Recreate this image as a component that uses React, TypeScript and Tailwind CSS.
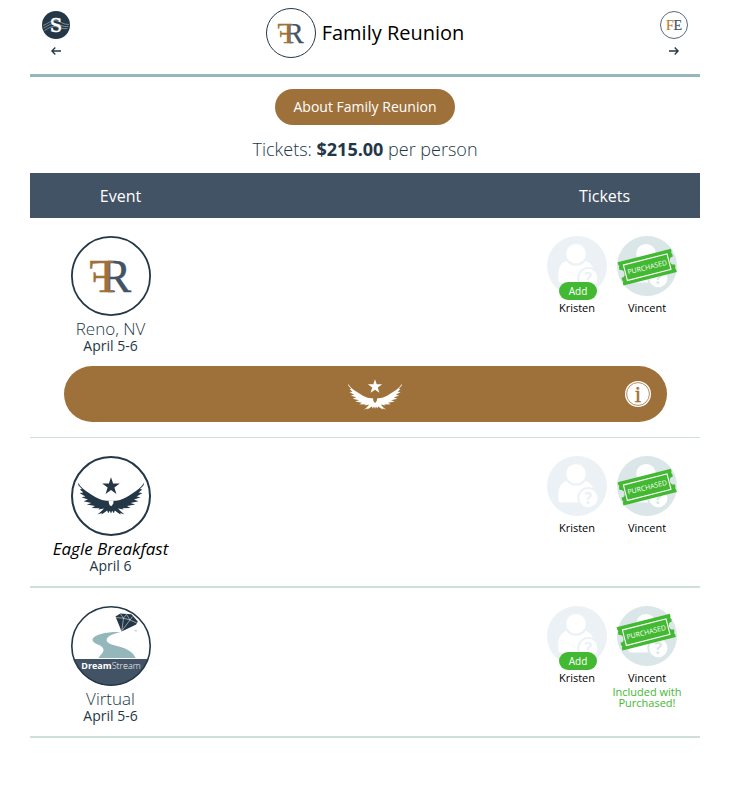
import React, { useId } from 'react';

const SERIF = 'Liberation Serif, serif';
const SANS = 'Open Sans, sans-serif';

function FamilyReunionLogo({ className, stroke }: { className: string; stroke: number }) {
  const clip = useId();
  return (
    <svg viewBox="0 0 80 80" className={className} role="img" aria-label="Family Reunion logo">
      <defs>
        <clipPath id={clip}>
          <rect x="37" y="20" width="30" height="40" />
        </clipPath>
      </defs>
      <circle cx="40" cy="40" r={40 - stroke / 2} fill="#fff" stroke="#243746" strokeWidth={stroke} />
      <text x="29.5" y="55.5" fontFamily={SERIF} fontSize="46" fill="#435366" stroke="#435366" strokeWidth="0.4" clipPath={`url(#${clip})`}>R</text>
      <g transform="translate(43.3 0) scale(-1 1)">
        <text x="0" y="55.5" fontFamily={SERIF} fontSize="46" fill="#9e713b" stroke="#9e713b" strokeWidth="0.5">F</text>
      </g>
    </svg>
  );
}

function EagleShape({ fill, gap }: { fill: string; gap: string }) {
  const wing =
    'M6.8 26.6 C10 31.5 14 34.8 18 37 C22.5 40 27 42.8 31 43.9 C34 44.6 37 44.8 40.2 44.8 V57.6 L38.8 54.8 L37.2 57.2 L36.2 54.6 L32.8 57 L30.4 58.4 L30.8 56.9 L26.4 58.6 L30 55.6 L33 52.4 L27.4 53.6 L28.6 52.2 L20.6 51.9 L24 50 L15.8 48.6 L20.4 47 L12.6 45.2 L17 43.6 L10.4 41.3 L14.4 40.4 L8.6 37 L12.4 36.6 L8.8 33.4 L11 33 L7.6 29.6 Z';
  return (
    <>
      <path d="M40 21.3 L42.1 27.5 L48.8 27.5 L43.4 31.5 L45.4 38 L40 34.1 L34.6 38 L36.6 31.5 L31.2 27.5 L37.9 27.5 Z" fill={fill} />
      <path d={wing} fill={fill} />
      <path d={wing} fill={fill} transform="translate(80 0) scale(-1 1)" />
      <path d="M37.6 44.4 H42.6 L42.2 47.8 L40.6 50 L38.8 49.4 L37.9 47 Z" fill={gap} />
    </>
  );
}

function EagleLogo() {
  return (
    <svg viewBox="0 0 80 80" className="size-20" role="img" aria-label="Eagle Breakfast logo">
      <circle cx="40" cy="40" r="39" fill="#fff" stroke="#243746" strokeWidth="2" />
      <EagleShape fill="#243746" gap="#fff" />
    </svg>
  );
}

function DreamStreamLogo() {
  return (
    <svg viewBox="0 0 80 80" className="size-20" role="img" aria-label="DreamStream logo">
      <circle cx="40" cy="40" r="39" fill="#fff" />
      <path d="M3 53 H77 A39 39 0 0 1 3 53 Z" fill="#435366" />
      <path d="M50 26 C38 25.5 22 28 21.5 34 C21.3 38 32 38.5 32.5 43.5 C32.6 47 29 49 27.5 52 H64.5 C62 45 54 42 46 40 C38 38 34.5 36 36 32.5 C37.5 29.5 43 27.5 50 26 Z" fill="#93b7bb" />
      <path d="M44.5 10.5 L49.3 7.6 L60.4 8.2 L66.8 15.5 L65.2 18.6 L50.6 25.6 Z" fill="#243746" />
      <path d="M45.2 11.5 L52.5 12.2 L59 14 L65.8 17 M52.5 12.2 L50.8 24.8 L59 14 M49.5 8 L52.5 12.2 L55.5 8.4 L59 14 L61.5 10.5" fill="none" stroke="#fff" strokeWidth="0.5" />
      <path d="M63.5 24.8 h2.6" stroke="#8b96a0" strokeWidth="0.6" />
      <circle cx="40" cy="40" r="39.2" fill="none" stroke="#243746" strokeWidth="1.6" />
      <text x="40" y="62.6" textAnchor="middle" fontFamily={SANS} fontSize="9" fill="#fff">
        <tspan fontWeight="700">Dream</tspan>
        <tspan fontWeight="300">Stream</tspan>
      </text>
    </svg>
  );
}

function StreamBadge() {
  return (
    <svg viewBox="0 0 28 28" className="size-7" aria-hidden="true">
      <circle cx="14" cy="14" r="14" fill="#243746" />
      <g fill="none" stroke="#8fa0ad" strokeWidth="0.8">
        <path d="M1 14.5 C6 12.5 9 9.5 13 9.5 C18 9.5 21 14 27 13.5" />
        <path d="M1.5 17 C6 15 9 12 13 12.5 C18 13 21 16.5 26.5 15.5" />
        <path d="M2.5 19.5 C7 17 9 15 13 15.5 C18 16 20 18.5 25.5 17.5" />
      </g>
      <text x="14" y="20.6" textAnchor="middle" fontFamily="DejaVu Serif, serif" fontSize="18" fill="#fff" stroke="#fff" strokeWidth="0.5">S</text>
    </svg>
  );
}

function FeBadge() {
  return (
    <svg viewBox="0 0 28 28" className="size-7" aria-hidden="true">
      <circle cx="14" cy="14" r="13.5" fill="#fff" stroke="#5a6978" strokeWidth="1" />
      <text x="13.4" y="19" fontFamily={SERIF} fontSize="14" fill="#435366" stroke="#435366" strokeWidth="0.2">E</text>
      <text x="6" y="19" fontFamily={SERIF} fontSize="14" fill="#c07a2c" stroke="#c07a2c" strokeWidth="0.2">F</text>
    </svg>
  );
}

function Arrow({ left }: { left?: boolean }) {
  return (
    <svg viewBox="0 0 10 8" className="h-2 w-[10px]" fill="none" stroke="#243746" strokeWidth="1.3" aria-hidden="true">
      {left ? <path d="M10 4 H1 M4.3 0.5 L0.9 4 L4.3 7.5" /> : <path d="M0 4 H9 M5.7 0.5 L9.1 4 L5.7 7.5" />}
    </svg>
  );
}

function Avatar({ purchased }: { purchased?: 'ticket' | 'included' }) {
  const bg = purchased ? '#dbe6e8' : '#ebf1f4';
  return (
    <svg viewBox="0 0 60 60" className="size-[60px] overflow-visible" aria-hidden="true">
      <circle cx="30" cy="30" r="30" fill={bg} />
      <path d="M14 46.5 C12 46.5 11.4 45.5 11.4 44 V38 C11.4 30 15 26 20 25 H38 C43 26 47 30 47 38 V46.5 Z" fill="#fff" />
      <circle cx="29" cy="17.7" r="12" fill={bg} />
      <circle cx="29" cy="17.7" r="9.8" fill="#fff" />
      <circle cx="41.3" cy="42" r="11" fill={bg} />
      <circle cx="41.3" cy="42" r="9.2" fill="#fff" />
      <text x="41.3" y="47.7" textAnchor="middle" fontFamily={SANS} fontWeight="700" fontSize="16" fill={bg}>?</text>
      {purchased && (
        <g transform={purchased === 'included' ? 'translate(29.2 26.2) rotate(-14.3)' : 'translate(30.2 31.2) rotate(-14.3)'}>
          <path
            d="M-27.5 -12 H27.5 V-9.5 L26.7 -8 L27.5 -6.5 V-4 A4 4 0 0 0 27.5 4 V6.5 L26.7 8 L27.5 9.5 V12 H-27.5 V9.5 L-26.7 8 L-27.5 6.5 V4 A4 4 0 0 0 -27.5 -4 V-6.5 L-26.7 -8 L-27.5 -9.5 Z"
            fill="#43b832"
          />
          <rect x="-22.5" y="-8" width="45" height="16" fill="none" stroke="#fff" strokeWidth="1.1" />
          <text x="0" y="2.5" textAnchor="middle" fontFamily={SANS} fontWeight="500" fontSize="7" fill="#fff">PURCHASED</text>
        </g>
      )}
    </svg>
  );
}

type Person = { name: string; add?: boolean; purchased?: 'ticket' | 'included' };

function PersonTicket({ person }: { person: Person }) {
  return (
    <div className="flex w-[70px] flex-col items-center text-center text-[11px] leading-[11px] text-black">
      <div className="relative mb-[6px]">
        <Avatar purchased={person.purchased} />
        {person.add && (
          <button type="button" aria-label={`Add ${person.name}`} className="absolute left-[12px] top-[46px] h-[18px] w-[38px] cursor-pointer rounded-full bg-[#43b832] text-[10px] leading-[18px] text-white">
            Add
          </button>
        )}
      </div>
      <p>{person.name}</p>
      {person.purchased === 'included' && <p className="mt-[3px] text-[#43b832]">Included with Purchased!</p>}
    </div>
  );
}

type EventItem = {
  logo: React.ReactNode;
  title: string;
  titleClass: string;
  date: string;
  people: Person[];
};

function EventCells({ item, edge }: { item: EventItem; edge: string }) {
  return (
    <>
      <td className={`pt-[18px] pr-5 align-top ${edge}`}>
        <div className="flex flex-col items-center text-center">
          {item.logo}
          <p className={`mt-1 whitespace-nowrap leading-[17px] ${item.titleClass}`}>{item.title}</p>
          <p className="text-sm leading-[17px]">{item.date}</p>
        </div>
      </td>
      <td className={`pt-[18px] pr-[18px] align-top ${edge}`}>
        <div className="flex justify-end">
          {item.people.map((p) => (
            <PersonTicket key={p.name} person={p} />
          ))}
        </div>
      </td>
    </>
  );
}

const reno: EventItem = {
  logo: <FamilyReunionLogo className="size-20" stroke={1.8} />,
  title: 'Reno, NV',
  titleClass: 'text-[17px] font-light',
  date: 'April 5-6',
  people: [{ name: 'Kristen', add: true }, { name: 'Vincent', purchased: 'ticket' }],
};

const breakfast: EventItem = {
  logo: <EagleLogo />,
  title: 'Eagle Breakfast',
  titleClass: 'text-[17px] italic text-black',
  date: 'April 6',
  people: [{ name: 'Kristen' }, { name: 'Vincent', purchased: 'ticket' }],
};

const virtual: EventItem = {
  logo: <DreamStreamLogo />,
  title: 'Virtual',
  titleClass: 'text-[17px] font-light',
  date: 'April 5-6',
  people: [{ name: 'Kristen', add: true }, { name: 'Vincent', purchased: 'included' }],
};

export default function App() {
  return (
    <main className="min-h-screen bg-white pr-12 pl-[30px] font-['Open_Sans',sans-serif] text-[#243746]">
      <header className="flex items-start justify-between border-b-[3px] border-[#93b7bb] px-3 pt-2 pb-4">
        <a href="#previous" aria-label="Previous event" className="flex flex-col items-center gap-2 pt-[3px]">
          <StreamBadge />
          <Arrow left />
        </a>
        <div className="flex items-center gap-[6px]">
          <FamilyReunionLogo className="size-[50px]" stroke={1.6} />
          <h1 className="text-xl text-black">Family Reunion</h1>
        </div>
        <a href="#next" aria-label="Next event" className="flex flex-col items-center gap-2 pt-[3px]">
          <FeBadge />
          <Arrow />
        </a>
      </header>

      <section className="flex flex-col items-center pt-3">
        <button type="button" className="h-9 cursor-pointer rounded-full bg-[#9e713b] px-[19px] text-sm font-medium text-white">
          About Family Reunion
        </button>
        <p className="pt-[10px] pb-[10px] text-lg font-light">
          Tickets: <strong className="font-bold">$215.00</strong> per person
        </p>
      </section>

      <table className="w-full table-fixed border-separate border-spacing-0">
        <colgroup>
          <col className="w-[181px]" />
          <col />
        </colgroup>
        <thead>
          <tr className="h-[45px] bg-[#435366] text-base text-white">
            <th scope="col" className="p-0 font-medium">Event</th>
            <th scope="col" className="p-0 text-right font-medium">
              <span className="inline-block w-[191px] text-center">Tickets</span>
            </th>
          </tr>
        </thead>
        <tbody>
          <tr>
            <EventCells item={reno} edge="pb-3" />
          </tr>
          <tr>
            <td colSpan={2} className="border-b border-[#cfdfde] pr-[33px] pb-[15px] pl-[34px]">
              <div className="flex h-14 items-center rounded-full bg-[#9e713b] pr-4 pl-[60px]">
                <div className="flex flex-1 justify-center">
                  <svg viewBox="7 21 66 38" className="h-[31px] w-[54px]" role="img" aria-label="Eagle">
                    <EagleShape fill="#fff" gap="#9e713b" />
                  </svg>
                </div>
                <button type="button" aria-label="Information" className="cursor-pointer">
                  <svg viewBox="0 0 26 26" className="size-[26px]" aria-hidden="true">
                    <circle cx="13" cy="13" r="13" fill="#fff" />
                    <circle cx="13" cy="13" r="11.4" fill="none" stroke="#9e713b" strokeWidth="0.8" />
                    <text x="13" y="20.5" textAnchor="middle" fontFamily={SERIF} fontSize="23" fill="#9e713b" stroke="#9e713b" strokeWidth="0.4">i</text>
                  </svg>
                </button>
              </div>
            </td>
          </tr>
          <tr>
            <EventCells item={breakfast} edge="border-b-2 border-[#cfdfde] pb-3" />
          </tr>
          <tr>
            <EventCells item={virtual} edge="border-b-2 border-[#cfdfde] pb-3" />
          </tr>
        </tbody>
      </table>
    </main>
  );
}
